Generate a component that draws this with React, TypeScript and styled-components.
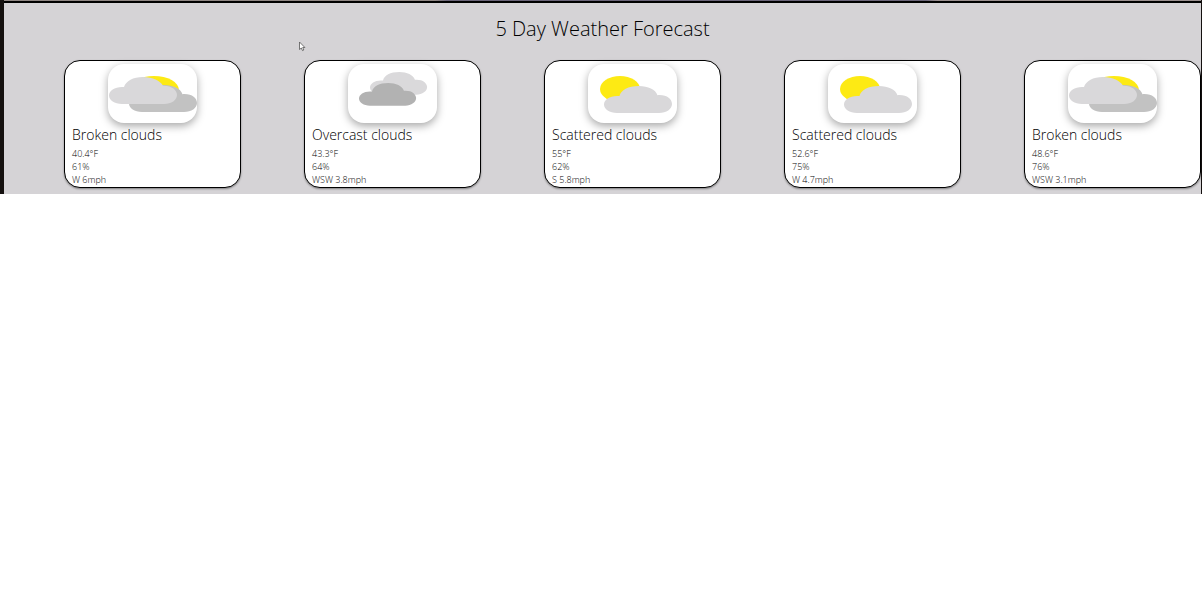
import React from "react";
import styled, { createGlobalStyle } from "styled-components";

const GlobalStyle = createGlobalStyle`
  * { box-sizing: border-box; }
  body {
    margin: 0;
    background: #ffffff;
    color: #000000;
    font-family: "Segoe UI", "Open Sans", "Noto Sans", sans-serif;
    font-weight: 350;
  }
`;

const Frame = styled.main`
  border-left: 4px solid #14100f;
  border-right: 1px solid #14100f;
`;

const PhotoEdge = styled.div`
  height: 1px;
  background: linear-gradient(to right, #8f8683 0 36%, #6a6478 37% 77%, #9b9090 78%);
`;

const Forecast = styled.section`
  border-top: 2px solid #000000;
  background: #d5d3d6;
  padding: 12px 0 6px;
`;

const Title = styled.h1`
  margin: 0 0 17px;
  font-size: 20px;
  font-weight: inherit;
  line-height: 28px;
  text-align: center;
`;

const Days = styled.div`
  display: grid;
  grid-template-columns: repeat(5, minmax(0, 1fr));
  gap: 63px;
  padding-left: 60px;
`;

const Card = styled.article`
  display: flex;
  flex-direction: column;
  padding: 3px 7px 1px;
  border: 1px solid #000000;
  border-radius: 16px;
  background: #ffffff;
  box-shadow: 0 1px 2px rgba(0, 0, 0, 0.4);
`;

const IconTile = styled.svg`
  align-self: center;
  width: 89px;
  height: 59px;
  border-radius: 16px;
  background: #ffffff;
  box-shadow: 0 3px 8px rgba(0, 0, 0, 0.35);
`;

const Condition = styled.h2`
  margin: 0;
  font-size: 14px;
  font-weight: inherit;
  line-height: 24px;
  white-space: nowrap;
`;

const Reading = styled.p`
  margin: 0;
  font-size: 9px;
  line-height: 13px;
  white-space: nowrap;
`;

const Pointer = styled.svg`
  position: absolute;
  top: 41px;
  left: 298px;
  width: 8px;
  height: 11px;
  pointer-events: none;
`;

const CLOUD =
  "M13 27C5.5 27 0 23.2 0 18.5S5.5 10 13 10H15.5C17 4 24 0 35 0C44 0 51.5 3.5 53.5 9.2C62.5 8.4 68 13 68 18S62.5 27 55 27Z";
const BROAD_CLOUD =
  "M13 27C5.5 27 0 23.2 0 18.5S5.5 10 13 10H15C17 4 24 0 34 0C44 0 51 3.5 54 8.7C62.5 8.4 68 13 68 18S62.5 27 55 27Z";

type Sky = "broken" | "overcast" | "scattered";

function WeatherIcon({ sky }: { sky: Sky }) {
  return (
    <IconTile viewBox="0 0 89 59" aria-hidden="true">
      {sky === "broken" && (
        <>
          <ellipse cx="46" cy="26" rx="25" ry="14" fill="#fdea14" />
          <path d={CLOUD} transform="translate(21 21)" fill="#c2c2c2" />
          <path d={BROAD_CLOUD} transform="translate(1 13)" fill="#d9d8da" />
        </>
      )}
      {sky === "overcast" && (
        <>
          <path d={CLOUD} transform="translate(22 8) scale(.84)" fill="#dad9db" />
          <path d={CLOUD} transform="translate(11 19) scale(.84)" fill="#b2b2b2" />
        </>
      )}
      {sky === "scattered" && (
        <>
          <ellipse cx="32" cy="25" rx="20" ry="13" fill="#fdea14" />
          <path d={CLOUD} transform="translate(16 22)" fill="#d9d8da" />
        </>
      )}
    </IconTile>
  );
}

interface Day {
  sky: Sky;
  condition: string;
  temperature: string;
  humidity: string;
  wind: string;
}

const days: Day[] = [
  { sky: "broken", condition: "Broken clouds", temperature: "40.4°F", humidity: "61%", wind: "W 6mph" },
  { sky: "overcast", condition: "Overcast clouds", temperature: "43.3°F", humidity: "64%", wind: "WSW 3.8mph" },
  { sky: "scattered", condition: "Scattered clouds", temperature: "55°F", humidity: "62%", wind: "S 5.8mph" },
  { sky: "scattered", condition: "Scattered clouds", temperature: "52.6°F", humidity: "75%", wind: "W 4.7mph" },
  { sky: "broken", condition: "Broken clouds", temperature: "48.6°F", humidity: "76%", wind: "WSW 3.1mph" },
];

export default function App() {
  return (
    <>
      <GlobalStyle />
      <Frame>
        <PhotoEdge />
        <Forecast>
          <Title>5 Day Weather Forecast</Title>
          <Days>
            {days.map((day, index) => (
              <Card key={index}>
                <WeatherIcon sky={day.sky} />
                <Condition>{day.condition}</Condition>
                <Reading>{day.temperature}</Reading>
                <Reading>{day.humidity}</Reading>
                <Reading>{day.wind}</Reading>
              </Card>
            ))}
          </Days>
        </Forecast>
      </Frame>
      <Pointer viewBox="0 0 8 11" aria-hidden="true">
        <path d="M1.5 1v7.5l1.8-1.5 1.2 2.6 1.3-.6-1.1-2.5h2.2z" fill="#fff" stroke="#555" strokeWidth=".8" />
      </Pointer>
    </>
  );
}
